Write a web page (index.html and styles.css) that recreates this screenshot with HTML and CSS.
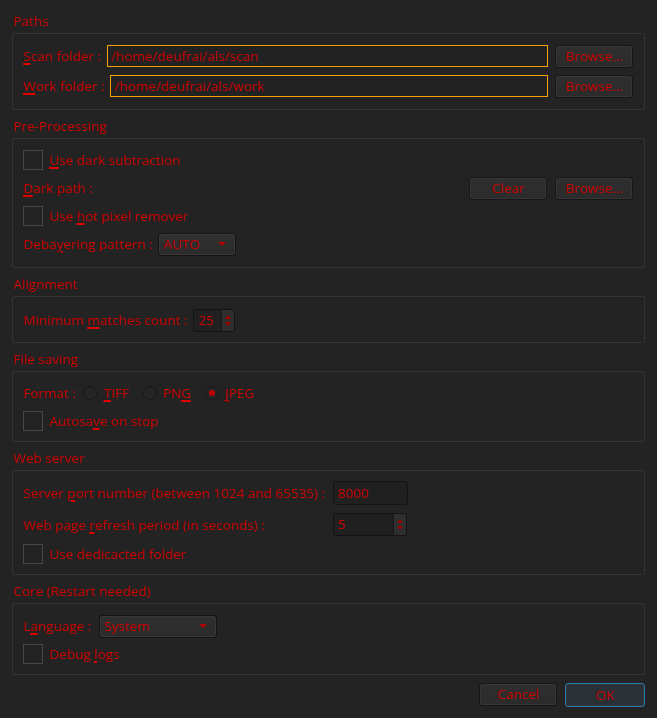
FILE: index.html
```html
<!DOCTYPE html>
<html>
<head>
<meta charset="utf-8">
<link rel="stylesheet" href="styles.css">
</head>
<body>
<div class="dialog">
  <section class="group">
    <div class="title">Paths</div>
    <div class="box box-paths">
      <div class="row">
        <span class="label"><u>S</u>can folder :</span>
        <div class="path-input">/home/deufrai/als/scan</div>
        <div class="btn">Browse...</div>
      </div>
      <div class="row">
        <span class="label"><u>W</u>ork folder :</span>
        <div class="path-input">/home/deufrai/als/work</div>
        <div class="btn">Browse...</div>
      </div>
    </div>
  </section>

  <section class="group">
    <div class="title">Pre-Processing</div>
    <div class="box box-pre">
      <div class="row">
        <span class="check"></span>
        <span class="label"><u>U</u>se dark subtraction</span>
      </div>
      <div class="row">
        <span class="label"><u>D</u>ark path :</span>
        <span class="spacer"></span>
        <div class="btn">Clear</div>
        <div class="btn">Browse...</div>
      </div>
      <div class="row">
        <span class="check"></span>
        <span class="label">Use <u>h</u>ot pixel remover</span>
      </div>
      <div class="row">
        <span class="label">Deba<u>y</u>ering pattern :</span>
        <div class="combo combo-bayer"><span>AUTO</span><span class="arrow"></span></div>
      </div>
    </div>
  </section>

  <section class="group">
    <div class="title">Alignment</div>
    <div class="box box-align">
      <div class="row">
        <span class="label">Minimum <u>m</u>atches count :</span>
        <div class="spin spin-small"><span class="spin-val">25</span><span class="spin-btns"><span class="up"></span><span class="down"></span></span></div>
      </div>
    </div>
  </section>

  <section class="group">
    <div class="title">File saving</div>
    <div class="box box-save">
      <div class="row">
        <span class="label">Format :</span>
        <span class="radio"></span><span class="label radio-label"><u>T</u>IFF</span>
        <span class="radio"></span><span class="label radio-label">PN<u>G</u></span>
        <span class="radio checked"></span><span class="label radio-label"><u>J</u>PEG</span>
      </div>
      <div class="row">
        <span class="check"></span>
        <span class="label">Autosa<u>v</u>e on stop</span>
      </div>
    </div>
  </section>

  <section class="group">
    <div class="title">Web server</div>
    <div class="box box-web">
      <div class="web-grid">
        <span class="label">Server <u>p</u>ort number (between 1024 and 65535) :</span>
        <div class="field">8000</div>
        <span class="label">Web page <u>r</u>efresh period (in seconds) :</span>
        <div class="spin spin-wide"><span class="spin-val">5</span><span class="spin-btns"><span class="up"></span><span class="down"></span></span></div>
      </div>
      <div class="row">
        <span class="check"></span>
        <span class="label">Use dedicacted folder</span>
      </div>
    </div>
  </section>

  <section class="group">
    <div class="title">Core (Restart needed)</div>
    <div class="box box-core">
      <div class="row">
        <span class="label">L<u>a</u>nguage :</span>
        <div class="combo combo-lang"><span>System</span><span class="arrow"></span></div>
      </div>
      <div class="row">
        <span class="check"></span>
        <span class="label">Debug <u>l</u>ogs</span>
      </div>
    </div>
  </section>

  <div class="actions">
    <div class="btn btn-cancel">Cancel</div>
    <div class="btn btn-ok">OK</div>
  </div>
</div>
</body>
</html>
```

FILE: styles.css
```css
html, body {
  margin: 0;
  padding: 0;
  background: #232323;
}
body {
  font-family: "Open Sans", "DejaVu Sans", sans-serif;
  font-size: 13.5px;
  color: #c40000;
  width: 657px;
  height: 718px;
  overflow: hidden;
}
.dialog {
  padding: 11px 12px 0 12px;
  display: flex;
  flex-direction: column;
  gap: 6px;
}
.title {
  height: 22px;
  line-height: 20px;
  padding-left: 1px;
}
.box {
  border: 1px solid #343434;
  border-radius: 2px;
  padding: 11px 11px 11px 10px;
  display: flex;
  flex-direction: column;
}
.box-paths { gap: 8px; padding-bottom: 12px; }
.box-pre { gap: 6px; padding-top: 10px; padding-bottom: 12px; }
.box-align { padding-top: 12px; padding-bottom: 11px; }
.box-save { gap: 6px; padding-top: 10px; padding-bottom: 9px; }
.box-web { gap: 6px; padding-top: 10px; padding-bottom: 9px; }
.box-core { gap: 6px; padding-top: 11px; padding-bottom: 9px; }

.row {
  display: flex;
  align-items: center;
  height: 22px;
  gap: 6px;
}
.label {
  white-space: nowrap;
  line-height: 20px;
}
u {
  text-decoration: underline;
  text-decoration-thickness: 2px;
  text-underline-offset: 2px;
  text-decoration-color: #e00000;
}
.spacer { flex: 1; }

.path-input {
  flex: 1;
  height: 22px;
  box-sizing: border-box;
  border: 1px solid #f5a300;
  background: #222;
  padding: 0 3px;
  line-height: 20px;
  margin-right: 1px;
}
.btn {
  width: 78px;
  height: 23px;
  box-sizing: border-box;
  border: 1px solid #171717;
  border-radius: 3px;
  background: linear-gradient(#2f2f2f, #2b2b2b);
  box-shadow: inset 0 0 0 1px #363636;
  text-align: center;
  line-height: 21px;
}
.box-pre .btn + .btn { margin-left: 2px; }

.check {
  width: 20px;
  height: 20px;
  box-sizing: border-box;
  border: 1px solid #474747;
  flex: none;
}

.combo {
  height: 23px;
  box-sizing: border-box;
  border: 1px solid #141414;
  border-radius: 3px;
  background: linear-gradient(#303030, #2b2b2b);
  box-shadow: inset 0 0 0 1px #383838;
  display: flex;
  align-items: center;
  justify-content: space-between;
  padding: 0 9px 0 4px;
}
.combo-bayer { width: 78px; }
.combo-lang { width: 118px; margin-left: 2px; }
.arrow {
  width: 0;
  height: 0;
  border-left: 4px solid transparent;
  border-right: 4px solid transparent;
  border-top: 4px solid #b00000;
}

.spin {
  height: 23px;
  box-sizing: border-box;
  border: 1px solid #141414;
  border-radius: 3px;
  background: #202020;
  display: flex;
  align-items: stretch;
}
.spin-small { width: 42px; }
.spin-wide { width: 74px; }
.spin-val {
  flex: 1;
  padding-left: 4px;
  line-height: 21px;
}
.spin-btns {
  width: 12px;
  background: #2f2f2f;
  border-left: 1px solid #181818;
  border-radius: 0 2px 2px 0;
  display: flex;
  flex-direction: column;
  align-items: center;
  justify-content: center;
  gap: 3px;
}
.up {
  width: 0; height: 0;
  border-left: 3.5px solid transparent;
  border-right: 3.5px solid transparent;
  border-bottom: 4px solid #9a0000;
}
.down {
  width: 0; height: 0;
  border-left: 3.5px solid transparent;
  border-right: 3.5px solid transparent;
  border-top: 4px solid #9a0000;
}

.radio {
  width: 14px;
  height: 14px;
  box-sizing: border-box;
  border-radius: 50%;
  border: 1px solid #191919;
  background: #252525;
  flex: none;
  display: flex;
  align-items: center;
  justify-content: center;
  margin-left: 2px;
}
.radio.checked::after {
  content: "";
  width: 6px;
  height: 6px;
  border-radius: 50%;
  background: #c00000;
}
.radio-label { margin-right: 6px; }

.web-grid {
  display: grid;
  grid-template-columns: auto 75px;
  justify-content: start;
  column-gap: 8px;
  row-gap: 8px;
  align-items: center;
  margin-bottom: 1px;
}
.field {
  height: 24px;
  box-sizing: border-box;
  border: 1px solid #141414;
  border-radius: 3px;
  background: #202020;
  padding-left: 4px;
  line-height: 22px;
}

.actions {
  display: flex;
  justify-content: flex-end;
  gap: 8px;
  margin-top: 2px;
}
.btn-cancel { width: 78px; }
.btn-ok {
  width: 80px;
  height: 24px;
  border: 1px solid #2c79ae;
  background: #2a3036;
  box-shadow: inset 0 0 0 1px #31393f;
  line-height: 22px;
}
```
